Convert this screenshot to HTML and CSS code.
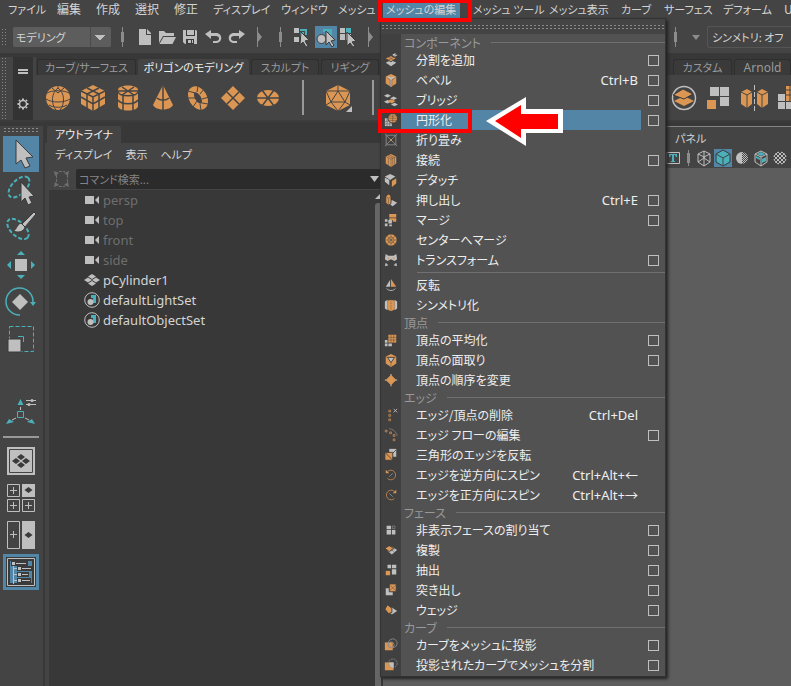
FILE: index.html
```html
<!DOCTYPE html>
<html lang="ja">
<head>
<meta charset="utf-8">
<title>Maya</title>
<link rel="stylesheet" href="styles.css">
</head>
<body>
<nav class="menubar">
  <button class="kana">ファイル</button><button>編集</button><button>作成</button><button>選択</button><button>修正</button><button class="kana">ディスプレイ</button><button class="kana">ウィンドウ</button><button class="kana">メッシュ</button><button class="open kana">メッシュの編集</button><button class="kana">メッシュ ツール</button><button class="kana">メッシュ表示</button><button class="kana">カーブ</button><button class="kana">サーフェス</button><button class="kana">デフォーム</button><button>UV</button>
</nav>

<div class="toolbar">
  <span class="grip"></span>
  <select class="mode" aria-label="メニューセット"><option>モデリング</option></select>
  <span class="handle"></span>
  <div class="files">
    <button aria-label="新規"><svg width="14" height="18" viewBox="0 0 14 18"><path class="g" d="M1 1h7v6h5v10H1z"/><path class="g" d="M9 1l4 4v1H9z"/></svg></button>
    <button aria-label="開く"><svg width="18" height="18" viewBox="0 0 18 18"><path class="g" d="M1 3h5l2 2h8v3H5l-4 7z"/><path class="g" d="M5.500 9H18l-3.500 7H1.500z"/></svg></button>
    <button aria-label="保存"><svg width="16" height="18" viewBox="0 0 16 18"><path class="g" d="M1 2h13l1 1v13H3l-2-2z"/><path class="d" d="M3 2h1v6h9V2h-1v5H5V2zM4 11h8v5H4z"/><path class="g" d="M6 12h5v3H6z"/><path class="d" d="M9 12h1v3H9z"/></svg></button>
    <button aria-label="元に戻す"><svg width="18" height="18" viewBox="0 0 18 18"><path class="g" d="M1 6l6-4v3h5c7 0 7 10 0 10H9v-2h3c4 0 4-5 0-5H7v3z"/></svg></button>
    <button aria-label="やり直し"><svg width="18" height="18" viewBox="0 0 18 18"><path class="g" d="M17 6l-6-4v3H6c-7 0-7 10 0 10h3v-2H6c-4 0-4-5 0-5h5v3z"/></svg></button>
  </div>
  <svg class="fold" width="5" height="20" viewBox="0 0 5 20"><path class="m" d="M0 0h1v20H0zM1 5l4 5-4 5z"/></svg>
  <span class="handle"></span>
  <div class="masks">
    <button aria-label="階層"><svg width="22" height="22" viewBox="0 0 22 22"><path class="g" d="M3 2h5v5H3zM3 11h5v5H3z"/><path class="lt" d="M9 4h6v5M10 10v-3h3" stroke-width="2"/><path class="g edge" d="M10 6l8 8-4 1 3 5-2 1-3-5-3 3z"/></svg></button>
    <button class="on" aria-label="オブジェクト"><svg width="22" height="22" viewBox="0 0 22 22"><path class="t" d="M8 3h9v9h-3V6H8z"/><circle class="g edge" cx="6.500" cy="13" r="4.500"/><path class="g edge" d="M11 5l9 9-4 1 3 4-2 2-3-5-3 3z"/></svg></button>
    <button aria-label="コンポーネント"><svg width="22" height="22" viewBox="0 0 22 22"><path class="g" d="M1 2h5v5H1zM1 8h5v6H1zM7 8h5v6H7z"/><path class="t" d="M7 2h5v5H7z"/><path class="g edge" d="M8 6l9 9-4 1 3 4-2 1-3-4-3 3z"/></svg></button>
  </div>
  <svg class="fold" width="5" height="20" viewBox="0 0 5 20"><path class="m" d="M0 0h1v20H0zM1 5l4 5-4 5z"/></svg>
  <div class="tail">
    <span class="handle"></span>
    <svg width="8" height="5" viewBox="0 0 8 5"><path class="m" d="M0 0h8L4 5z"/></svg>
    <span class="field">シンメトリ: オフ</span>
  </div>
</div>

<div class="shelf">
  <span class="grip"></span>
  <div class="shelf-side">
    <svg width="10" height="5" viewBox="0 0 10 5"><path class="g" d="M0 0h10v2H0zM0 3h10v2H0z"/></svg>
    <svg width="12" height="12" viewBox="0 0 12 12"><circle class="lg" cx="6" cy="6" r="3.500" stroke-width="1.500"/><path class="lg" stroke-width="2" d="M6 .5v1.500M6 10v1.500M.5 6H2M10 6h1.500M2 2l1 1M9 9l1 1M10 2L9 3M3 9l-1 1"/></svg>
  </div>
  <div class="shelf-main">
    <div class="tabs">
      <button>カーブ/サーフェス</button><button class="active">ポリゴンのモデリング</button><button>スカルプト</button><button>リギング</button>
      <span class="tabs-end"><button>カスタム</button><button class="latin">Arnold</button></span>
    </div>
    <div class="shelf-row">
      <button aria-label="球"><svg viewBox="0 0 26 26"><circle class="o" cx="13" cy="13" r="12"/><path class="ld" d="M2 8c5-3 17-3 22 0M1 14c6 4 18 4 24 0M4 20c5 3 13 3 18 0M13 3c-7 5-7 16-2 22M13 3c7 5 7 16 2 22M7 3l6 5 6-5M13 1v3"/></svg></button>
      <button aria-label="立方体"><svg viewBox="0 0 26 26"><path class="o" d="M13 0l12 6v13l-12 7-12-7V6z"/><path class="ld" stroke-width="1.500" d="M1 6l12 6 12-6M13 12v14M7 3l12 6v14M19 3L7 9v14M1 12l12 7 12-7"/></svg></button>
      <button aria-label="円柱"><svg viewBox="0 0 26 26"><path class="o" d="M3 5c0-6 20-6 20 0v16c0 6-20 6-20 0z"/><path class="ld" stroke-width="1.500" d="M3 7c2 5 18 5 20 0M3 15c3 5 17 5 20 0M8 11v14M18 11v14M3 6h20M7 2l12 8M19 2L7 10"/></svg></button>
      <button aria-label="円錐"><svg viewBox="0 0 26 26"><path class="o" d="M13 0l10 20c-3 6-17 6-20 0z"/><path class="ld" stroke-width="1.500" d="M13 0v26M7 13c3 3 9 3 12 0"/></svg></button>
      <button aria-label="トーラス"><svg viewBox="0 0 26 26"><ellipse class="lo" cx="13" cy="13" rx="6" ry="9.500" stroke-width="6" transform="rotate(-30 13 13)"/><path class="ld" d="M3 6l7 2M13 1l-1 6M2 13l8 0M8 22l4-6M16 25l-1-6M23 19l-6-1M24 12l-7 2M19 4l-4 5"/></svg></button>
      <button aria-label="平面"><svg viewBox="0 0 26 26"><path class="o" d="M13 1l12 12-12 12L1 13z"/><path class="ld" stroke-width="1.500" d="M7 7l12 12M19 7L7 19"/></svg></button>
      <button aria-label="ディスク"><svg viewBox="0 0 26 26"><ellipse class="o" cx="13" cy="13" rx="11" ry="8"/><path class="ld" stroke-width="1.500" d="M2 13h22M7 5l12 16M19 5L7 21"/></svg></button>
      <span class="bar"></span>
      <button aria-label="多面体"><svg viewBox="0 0 26 26"><path class="o" d="M13 0l12 6v14l-12 6-12-6V6z"/><path class="ld" d="M13 0v6M13 6L6 17h14zM1 6l12 0 12 0M1 6l5 11-5 3M25 6l-5 11 5 3M6 17l7 9 7-9"/></svg><svg class="corner" viewBox="0 0 6 6"><path class="g" d="M6 0v6H0z"/></svg></button>
      <span class="bar"></span>
      <div class="shelf-end">
        <button aria-label="結合"><svg viewBox="0 0 26 26"><circle class="lg" cx="13" cy="13" r="11.500" stroke-width="1.500"/><path class="o" d="M13 11l10 5-10 5-10-5z"/><path class="o edge" d="M12 4l10 5-9 5-11-4z"/></svg></button>
        <button aria-label="分離"><svg viewBox="0 0 26 26"><path class="g" d="M5 2h9v9H5zM15 2h9v9h-9zM15 12h9v9h-9z"/><path class="o" d="M2 15h9v9H2z"/></svg></button>
        <button aria-label="ミラー"><svg class="wide" viewBox="0 0 30 26"><path class="o" d="M2 7l6-3 5 3v12l-5 4-6-4zM18 7l5-3 6 3v12l-6 4-5-4z"/><path class="ld" d="M2 7l6 3 5-3M8 10v13M18 7l5 3 6-3M23 10v13"/><path class="lg" stroke-dasharray="5 2" d="M15.500 0v26"/></svg></button>
        <button aria-label="スムーズ"><svg viewBox="0 0 26 26"><path class="g" d="M1 9h7v7H1zM1 17h7v7H1zM9 17h7v7H9z"/><path class="o" d="M9 1h16v15H9z"/><path class="ld" d="M13 1v15M17 1v15M9 5h16M9 10h16"/></svg></button>
      </div>
    </div>
  </div>
</div>

<main class="workspace">
  <aside class="toolbox">
    <span class="dots"></span>
    <button class="on" aria-label="選択ツール"><svg viewBox="0 0 36 36"><path class="g edge" d="M13 4l17 17-7 1 4 8-5 2-4-8-5 4z"/></svg></button>
    <button aria-label="投げ縄"><svg viewBox="0 0 36 36"><ellipse class="lt" cx="16" cy="14" rx="13" ry="7" stroke-width="2" stroke-dasharray="4 2" transform="rotate(-45 16 14)"/><path class="g edge" d="M18 9l13 14-5 1 3 6-4 2-3-7-4 4z"/></svg></button>
    <button aria-label="ペイント選択"><svg viewBox="0 0 36 36"><ellipse class="lt" cx="15" cy="19" rx="13" ry="7" stroke-width="2" stroke-dasharray="4 2" transform="rotate(42 15 19)"/><path class="g edge" d="M31 2l2 2-11 13-3-3zM18 13l4 4c-1 5-7 6-12 4 4-1 3-6 8-8z"/></svg></button>
    <button aria-label="移動"><svg viewBox="0 0 36 36"><path class="g" d="M12 12h12v12H12z"/><path class="t" d="M18 4l4 4h-8zM18 32l4-4h-8zM4 18l4-4v8zM32 18l-4-4v8z"/></svg></button>
    <button aria-label="回転"><svg viewBox="0 0 36 36"><path class="lt" stroke-width="1.500" d="M17 31A13.500 13.500 0 1 1 30 18"/><path class="t" d="M27 18h6l-3 4z"/><path class="g" d="M17 10l8 8-8 8-8-8z"/></svg></button>
    <button aria-label="スケール"><svg viewBox="0 0 36 36"><path class="lt" stroke-dasharray="4 2" d="M6.500 5.500h24v25h-24z"/><path class="g edge" d="M5 18h13v13H5z"/><path class="lt" d="M15 15.500h5.500V21"/></svg></button>
    <span class="blank"></span>
    <button aria-label="最後のツール"><svg viewBox="0 0 36 36"><path class="lg" d="M17.500 12v3M13 23l-4 2M22 23l4 2M23 5.500h10M23 9.500h10"/><path class="lt" d="M14.500 16.500h6v6h-6z"/><path class="t" d="M17.500 4l3 6h-6zM3 29l3-5 5 3zM32 29l-3-5-5 3z"/><circle class="g" cx="29" cy="5.500" r="1.500"/><circle class="g" cx="26" cy="9.500" r="1.500"/></svg></button>
    <hr>
    <button aria-label="1 面"><svg viewBox="0 0 36 36"><path class="g" d="M4 4h28v28H4z"/><path class="ld" d="M6.500 6.500h23v23h-23z"/><path class="d" d="M18 11l4 3-4 3-4-3zM18 19l4 3-4 3-4-3zM13 15l4 3-4 3-4-3zM23 15l4 3-4 3-4-3z"/></svg></button>
    <button aria-label="4 面"><svg viewBox="0 0 36 36"><path class="g" d="M19 4h13v13H19z"/><path class="d" d="M25.500 7l4 3-4 3-4-3z"/><path class="lg" d="M4.500 4.500h12v12h-12zM4.500 19.500h12v12h-12zM19.500 19.500h12v12h-12zM10.500 7v7M7 10.500h7M10.500 22v7M7 25.500h7M25.500 22v7M22 25.500h7"/></svg></button>
    <button aria-label="2 面"><svg viewBox="0 0 36 36"><path class="lg" d="M4.500 4.500h12v27h-12zM10.500 14v7M7 17.500h7"/><path class="g" d="M19 4h13v28H19z"/><path class="d" d="M25.500 15l4 3-4 3-4-3z"/></svg></button>
    <button class="on" aria-label="アウトライナ"><svg viewBox="0 0 36 36"><path class="d" d="M3 3h30v30H3z"/><path class="b" d="M7 7h22v22H7z"/><path class="lg" d="M4.500 4.500h27v27h-27zM10.500 11v19M11 14.500h5M11 20.500h5M11 26.500h5"/><path class="d" d="M8 7h17v5H8zM14 12h15v5H14zM14 18h12v5H14zM14 24h14v5H14z"/><path class="g" d="M9 8h3v3H9zM13 9h10v1H13zM15 13h3v3h-3zM19 14h9v1h-9zM15 19h3v3h-3zM19 20h6v1h-6zM15 25h3v3h-3zM19 26h8v1h-8z"/></svg></button>
  </aside>

  <section class="outliner">
    <div class="panel-tabs"><span>アウトライナ</span></div>
    <div class="panel-menu"><button>ディスプレイ</button><button>表示</button><button>ヘルプ</button></div>
    <div class="search">
      <svg width="16" height="18" viewBox="0 0 16 18"><path class="s" d="M0 1l5 2-4 3zM15 1l-5 2 4 3zM0 17l5-2-4-3zM15 17l-5-2 4-3z"/><path class="ls" stroke-dasharray="3 1" d="M5 1.500h6M5 16.500h6M2.500 5v8M13.500 5v8"/></svg>
      <input type="text" placeholder="コマンド検索..." aria-label="コマンド検索">
      <svg class="drop" width="9" height="6" viewBox="0 0 9 6"><path class="g" d="M0 0h9L4.500 6z"/></svg>
    </div>
    <div class="tree">
      <ul>
        <li class="dim"><svg viewBox="0 0 16 16"><path class="g" d="M1 4h9v8H1zM11 8l4-4v8z"/></svg>persp</li>
        <li class="dim"><svg viewBox="0 0 16 16"><path class="g" d="M1 4h9v8H1zM11 8l4-4v8z"/></svg>top</li>
        <li class="dim"><svg viewBox="0 0 16 16"><path class="g" d="M1 4h9v8H1zM11 8l4-4v8z"/></svg>front</li>
        <li class="dim"><svg viewBox="0 0 16 16"><path class="g" d="M1 4h9v8H1zM11 8l4-4v8z"/></svg>side</li>
        <li><svg viewBox="0 0 16 16"><path class="g" d="M8 2l4 2.500L8 7 4 4.500zM8 9l4 2.500L8 14l-4-2.500zM4 5.500L8 8l-4 2.500L0 8zM12 5.500L16 8l-4 2.500L8 8z"/></svg>pCylinder1</li>
        <li><svg viewBox="0 0 16 16"><circle class="lg" cx="8" cy="8" r="7.300"/><path class="t" d="M7 3h5v8H9V6H7z"/><circle class="g" cx="6.500" cy="10" r="3"/></svg>defaultLightSet</li>
        <li><svg viewBox="0 0 16 16"><circle class="lg" cx="8" cy="8" r="7.300"/><path class="t" d="M7 3h5v8H9V6H7z"/><circle class="g" cx="6.500" cy="10" r="3"/></svg>defaultObjectSet</li>
      </ul>
      <div class="scroll"><svg width="5" height="5" viewBox="0 0 5 5"><path class="g" d="M5 0v5H0z"/></svg><i></i></div>
    </div>
  </section>

  <section class="viewport">
    <div class="view-head">
      <div class="view-menu"><button>パネル</button></div>
      <div class="view-tools">
        <svg viewBox="0 0 18 18"><path class="lg" d="M2.500 3.500h13v11h-13z"/><path class="t" d="M5 5h8v3h-1l-1-2h-1v6h1v1H7v-1h1V6H7L6 8H5z"/></svg>
        <span class="handle"></span>
        <svg viewBox="0 0 18 18"><path class="lg" d="M9 2l6 3v8l-6 4-6-4V5zM3 5l6 3 6-3M9 8v9M9 2v7l-6 4M9 9l6 4"/></svg>
        <svg class="on" viewBox="0 0 18 18"><path class="t edge" d="M9 1l7 4v8l-7 4-7-4V5z"/><path class="ld" d="M2 5l7 4 7-4M9 9v8"/></svg>
        <svg viewBox="0 0 18 18"><defs><pattern id="fine" width="2" height="2" patternUnits="userSpaceOnUse"><path class="g" d="M0 0h1v1H0zM1 1h1v1H1z"/></pattern></defs><path class="g" d="M9 3a6 6 0 0 0 0 12z"/><path fill="url(#fine)" d="M9 3a6 6 0 0 1 0 12z"/></svg>
        <svg viewBox="0 0 18 18"><path class="lg" d="M9 2l6 3v8l-6 4-6-4V5zM3 5l6 3 6-3M9 8v9"/><path class="t" d="M9 3l4 2-4 2-4-2zM4 7l4 2v2L4 9zM10 10l4-2v4l-4 2z"/></svg>
        <svg viewBox="0 0 18 18"><defs><pattern id="coarse" width="4" height="4" patternUnits="userSpaceOnUse"><path class="g" d="M0 0h2v2H0zM2 2h2v2H2z"/></pattern></defs><circle fill="url(#coarse)" cx="9" cy="9" r="6.500"/></svg>
      </div>
    </div>
  </section>
</main>

<div class="popup" role="menu">
  <div class="tear"></div>
  <h2>コンポーネント</h2>
  <div class="row"><svg viewBox="0 0 16 16"><path class="g" d="M8 8l6 3-6 4-6-4zM10 1h2V0h1v2h2v1h-2v2h-1V3h-2z"/><path class="o edge" d="M8 3l6 3-6 4-7-4z"/><path class="ld thin" d="M4 4l7 4M11 5L5 8"/></svg><button>分割を追加</button><button class="box" aria-label="オプション"></button></div>
  <div class="row"><svg viewBox="0 0 16 16"><path class="o" d="M8 1l6 3v8l-6 4-6-4V4z"/><path class="g" d="M3 5l5 2 5-2-2-1-3 1-3-1zM7 7h2v8H7z"/><path class="ld thin" d="M3 5l4 3v7M13 5L9 8v7"/></svg><button>ベベル<kbd>Ctrl+B</kbd></button><button class="box" aria-label="オプション"></button></div>
  <div class="row"><svg viewBox="0 0 16 16"><path class="g" d="M4 1l4 2-4 2-4-2zM11 4l4 2-4 2-4-2zM4 8l4 2-4 2-4-2zM12 11l4 2-4 2-4-2z"/><path class="o" d="M8 7l5 2-4 3-5-3z"/></svg><button>ブリッジ</button><button class="box" aria-label="オプション"></button></div>
  <div class="row"><svg viewBox="0 0 16 16"><path class="g" d="M1 6h8v9H1z"/><path class="ld thin" d="M1 9.500h8M1 12.500h8M3.500 6v9M6.500 6v9"/><circle class="o edge" cx="10" cy="6" r="5.500"/><path class="ld thin" d="M5 6h11M10 1v11M5 3.500h10M5 8.500h10"/></svg><button class="hot">円形化</button><button class="box" aria-label="オプション"></button></div>
  <div class="row"><svg viewBox="0 0 16 16"><path class="lm" d="M2.500 2.500h11v11h-11zM1 1l14 14M15 1L1 15"/><path class="o" d="M7 7h2v2H7z"/></svg><button>折り畳み</button></div>
  <div class="row"><svg viewBox="0 0 16 16"><path class="o" d="M8 1l6 3v8l-6 4-6-4V4z"/><path class="ld thin" d="M2 4l6 3 6-3M8 7v9M4 3l6 3v8M6 2l6 3v8M5 6v8"/></svg><button>接続</button><button class="box" aria-label="オプション"></button></div>
  <div class="row"><svg viewBox="0 0 16 16"><path class="g" d="M7 1l6 3-6 4-6-4zM1 5l5 3v6l-5-4z"/><path class="o" d="M9 9l5-3v6l-5 4z"/></svg><button>デタッチ</button></div>
  <div class="row"><svg viewBox="0 0 16 16"><path class="g" d="M9 8l6 3-5 4-6-4z"/><path class="o edge" d="M5 1l3 2v9l-3 2-3-3V4z"/><path class="ld thin" d="M2 4l3 2 3-2M5 6v8"/></svg><button>押し出し<kbd>Ctrl+E</kbd></button><button class="box" aria-label="オプション"></button></div>
  <div class="row"><svg viewBox="0 0 16 16"><path class="o" d="M6 1h4v4H6zM10 1h4v4h-4zM10 6h4v4h-4zM6 6h4v2H6z"/><path class="g" d="M1 7h3v3H1zM5 8h4v4H5zM1 12h3v3H1zM6 13h3v2H6z"/></svg><button>マージ</button><button class="box" aria-label="オプション"></button></div>
  <div class="row"><svg viewBox="0 0 16 16"><circle class="o" cx="8" cy="8" r="6.500"/><path class="ld thin" d="M1 8h14M8 1v14M3 3l10 10M13 3L3 13"/><circle class="ld thin" cx="8" cy="8" r="3.500"/></svg><button>センターへマージ</button></div>
  <div class="row"><svg viewBox="0 0 16 16"><path class="g" d="M2 1l3 2h6l3-2 1 6-3 2-4-2-4 2-3-2zM1 15l1-4 3 3zM15 15l-1-4-3 3z"/><path class="o" d="M4 5h2v2H4zM10 5h2v2h-2z"/></svg><button>トランスフォーム</button><button class="box" aria-label="オプション"></button></div>
  <hr>
  <div class="row"><svg viewBox="0 0 16 16"><path class="g" d="M7 2v8H2z"/><path class="o" d="M8 1l6 9H8z"/><path class="lg" d="M3 12c2 3 8 3 10 0"/></svg><button>反転</button></div>
  <div class="row"><svg viewBox="0 0 16 16"><path class="g" d="M1 4l3-2v12l-3-2zM15 4l-3-2v12l3-2z"/><path class="o" d="M4 3l4-1 4 1v10l-4 2-4-2z"/><path class="ld thin" stroke-dasharray="2 1" d="M8 2v13"/></svg><button>シンメトリ化</button></div>
  <h2>頂点</h2>
  <div class="row"><svg viewBox="0 0 16 16"><path class="g" d="M1 8h3v3H1zM1 12h3v3H1zM5 12h4v3H5z"/><path class="o" d="M5 2h9v9H5z"/><path class="ld thin" d="M8 2v9M11 2v9M5 5h9M5 8h9"/></svg><button>頂点の平均化</button><button class="box" aria-label="オプション"></button></div>
  <div class="row"><svg viewBox="0 0 16 16"><path class="o" d="M8 1l6 3v8l-6 4-6-4V4z"/><path class="g edge" d="M4 5h8l-4 6z"/><path class="ld thin" d="M8 11v4M2 4l2 1M14 4l-2 1"/></svg><button>頂点の面取り</button><button class="box" aria-label="オプション"></button></div>
  <div class="row"><svg viewBox="0 0 16 16"><path class="m" d="M7 1h2v2H7zM7 13h2v2H7zM1 7h2v2H1zM13 7h2v2h-2z"/><path class="o" d="M8 2l6 6-6 6-6-6z"/></svg><button>頂点の順序を変更</button></div>
  <h2>エッジ</h2>
  <div class="row"><svg viewBox="0 0 16 16"><path class="lo soft" d="M5.500 2.500h2v2h-2zM5.500 7.500h2v2h-2zM5.500 12.500h2v2h-2z"/><path class="lg" d="M11 1l4 4M15 1l-4 4"/></svg><button>エッジ/頂点の削除<kbd>Ctrl+Del</kbd></button></div>
  <div class="row"><svg viewBox="0 0 16 16"><path class="lo soft" d="M1.500 2.500h2v2h-2zM6.500 4.500h2v2h-2zM10.500 7.500h2v2h-2zM10.500 12.500h2v2h-2z"/><path class="lm soft" d="M6 1c4 0 8 3 9 8"/></svg><button>エッジ フローの編集</button><button class="box" aria-label="オプション"></button></div>
  <div class="row"><svg viewBox="0 0 16 16"><path class="g" d="M6 1h8v9H6z"/><path class="o edge" d="M1 5h9v9H1z"/><path class="ld" d="M1 5l9 9M10 6l4-4"/></svg><button>三角形のエッジを反転</button></div>
  <div class="row"><svg viewBox="0 0 16 16"><path class="lo soft" d="M4 4a5.500 5.500 0 1 1 0 8"/><path class="o" d="M2 2v4h4z"/><path class="lm" d="M6 10l4-4"/></svg><button>エッジを逆方向にスピン<kbd>Ctrl+Alt+←</kbd></button></div>
  <div class="row"><svg viewBox="0 0 16 16"><path class="lo soft" d="M12 4a5.500 5.500 0 1 0 0 8"/><path class="o" d="M14 2v4h-4z"/><path class="lm" d="M6 6l4 4"/></svg><button>エッジを正方向にスピン<kbd>Ctrl+Alt+→</kbd></button></div>
  <h2>フェース</h2>
  <div class="row"><svg viewBox="0 0 16 16"><path class="g" d="M3 3h5v4H3zM3 8h5v5H3zM9 8h4v5H9z"/><path class="lm soft" d="M9.500 3.500h3v3h-3z"/></svg><button>非表示フェースの割り当て</button><button class="box" aria-label="オプション"></button></div>
  <div class="row"><svg viewBox="0 0 16 16"><path class="g" d="M9 4l6 4-6 5-5-4z"/><path class="o edge" d="M6 3l5 3-5 4-5-4z"/><path class="ld thin" d="M8 9l5-3M8 7l4 4"/></svg><button>複製</button><button class="box" aria-label="オプション"></button></div>
  <div class="row"><svg viewBox="0 0 16 16"><path class="g" d="M4 2h4v4H4zM9 2h5v4H9zM9 7h5v6H9z"/><path class="o" d="M2 9h5v5H2z"/></svg><button>抽出</button><button class="box" aria-label="オプション"></button></div>
  <div class="row"><svg viewBox="0 0 16 16"><path class="g" d="M2 6h8v8H2z"/><path class="o edge" d="M6 1h8v9H6z"/><path class="ld thin" d="M6 2l8 7M14 2L6 9"/></svg><button>突き出し</button><button class="box" aria-label="オプション"></button></div>
  <div class="row"><svg viewBox="0 0 16 16"><path class="g" d="M9 5l6 4-6 4-5-4z"/><path class="o edge" d="M4 2l5 4v5l-4 1-4-5z"/></svg><button>ウェッジ</button><button class="box" aria-label="オプション"></button></div>
  <h2>カーブ</h2>
  <div class="row"><svg viewBox="0 0 16 16"><path class="o" d="M1 5h9v9H1z"/><circle class="lm" cx="10" cy="6" r="5"/><circle class="lm" cx="8" cy="8" r="3.500"/></svg><button>カーブをメッシュに投影</button><button class="box" aria-label="オプション"></button></div>
  <div class="row"><svg viewBox="0 0 16 16"><path class="o" d="M1 5h10v9H1z"/><circle class="lm" cx="10" cy="6" r="5" stroke-dasharray="2 1"/><path class="g" d="M6 5h5v6c-3 0-5-2-5-6z"/></svg><button>投影されたカーブでメッシュを分割</button><button class="box" aria-label="オプション"></button></div>
</div>

<div class="mark mark-menu"></div>
<div class="mark mark-item"></div>
<svg class="arrow" width="79" height="52" viewBox="0 0 79 52"><path class="white" d="M1 25L41 1v12h37v24H41v13z"/><path class="red" d="M10 25L36 9v9h37v15H36v9z"/></svg>
</body>
</html>
```
FILE: styles.css
```css
:root {
  --bg: #444;
  --dark: #383838;
  --text: #d4d4d4;
  --blue: #5285a6;
  --orange: #dc9653;
  --grey: #bfbfbf;
  --teal: #4ab0ba;
}

* { box-sizing: border-box; }

body {
  margin: 0;
  min-height: 100vh;
  display: flex;
  flex-direction: column;
  position: relative;
  overflow: hidden;
  background: var(--bg);
  color: var(--text);
  font: 12px/16px "Noto Sans CJK JP", sans-serif;
  font-feature-settings: "palt";
}

button, input, select {
  margin: 0;
  padding: 0;
  border: 0;
  background: none;
  color: inherit;
  font: inherit;
  font-feature-settings: inherit;
  text-align: left;
  white-space: nowrap;
}

svg { display: block; flex: none; }
.g { fill: var(--grey); }
.o { fill: var(--orange); }
.t { fill: var(--teal); }
.d { fill: #3a3a3a; }
.m { fill: #8c8c8c; }
.s { fill: #6e6e6e; }
.b { fill: var(--blue); }
.lg, .lo, .lt, .ld, .lm, .ls { fill: none; }
.lg { stroke: var(--grey); }
.lo { stroke: var(--orange); }
.lt { stroke: var(--teal); }
.ld { stroke: #444; }
.lm { stroke: #8c8c8c; }
.ls { stroke: #6e6e6e; }
.edge { stroke: #3a3a3a; stroke-width: 1; }
.thin { stroke-opacity: .5; }
.soft { stroke-opacity: .8; }
.white { fill: #fff; }
.red { fill: #f00; }

.menubar {
  display: grid;
  grid-template-columns: 49px 39px 39px 39px 39px 68px 57px 45px 90px 76px 72px 43px 59px 61px 40px;
  height: 20px;
  padding-left: 8px;
}
.menubar button { height: 18px; }
.menubar .kana { font-size: 11px; }
.menubar .open {
  width: 77px;
  padding-left: 3px;
  background: var(--blue);
}

.grip {
  width: 6px;
  align-self: stretch;
  margin: 0 6px 0 1px;
  background: radial-gradient(circle, #858585 0 .7px, transparent 1px) 0 0 / 3px 3px;
}
.handle {
  width: 3px;
  height: 20px;
  background: linear-gradient(#8c8c8c, #8c8c8c) center / 1px 100% no-repeat,
    linear-gradient(#8c8c8c, #8c8c8c) center / 3px 10px no-repeat;
}

.toolbar {
  display: flex;
  align-items: center;
  height: 37px;
  padding: 8px 0 7px;
  border-bottom: 4px solid var(--dark);
}
.mode {
  width: 98px;
  height: 20px;
  padding-left: 3px;
  margin-right: 10px;
  border-radius: 2px;
  appearance: none;
  font-size: 11px;
  background: linear-gradient(to bottom right, var(--grey) 50%, transparent 52%) right 6px center / 5px 5px no-repeat,
    linear-gradient(to bottom left, var(--grey) 50%, transparent 52%) right 11px center / 5px 5px no-repeat,
    linear-gradient(#4a4a4a, #4a4a4a) right 20px top / 1px 100% no-repeat, #5d5d5d;
}
.files { display: flex; gap: 6px; margin: 0 11px 0 14px; }
.files + .fold { margin-right: 17px; }
.masks { display: flex; gap: 2px; margin: 0 7px 0 9px; }
.masks .on, .toolbox .on, .view-tools .on { background: var(--blue); }
.tail { display: flex; align-items: center; gap: 7px; width: 117px; margin-left: auto; }
.tail svg { margin-left: 8px; }
.field {
  flex: 1;
  height: 22px;
  padding: 2px 4px;
  border: 1px solid #555;
  border-right: 0;
  border-radius: 3px 0 0 3px;
  font-size: 11px;
  white-space: nowrap;
}

.shelf {
  display: flex;
  height: 65px;
  border-bottom: 2px solid #3c3c3c;
}
.shelf-side {
  display: flex;
  flex-direction: column;
  justify-content: space-between;
  align-items: center;
  width: 20px;
  padding: 12px 0 10px;
  background: #333;
}
.shelf-main { flex: 1; min-width: 0; margin-left: 3px; }
.tabs {
  display: grid;
  grid-template-columns: 99px 111px 68px 58px 1fr;
  gap: 2px;
  height: 18px;
  padding: 2px 0 0 1px;
  background: var(--dark);
}
.tabs button {
  height: 16px;
  border: 1px solid #2e2e2e;
  border-bottom: 0;
  border-radius: 3px 3px 0 0;
  color: #999;
  background: #3a3a3a;
  font-size: 11px;
  line-height: 15px;
  text-align: center;
}
.tabs .active { background: var(--bg); border-color: var(--bg); color: #eee; }
.tabs .latin { font: 12px/15px "Noto Sans", sans-serif; }
.tabs-end { display: grid; grid-template-columns: 59px 57px; gap: 2px; justify-self: end; }
.shelf-row { display: flex; align-items: center; gap: 9px; height: 45px; padding-left: 9px; }
.shelf-row svg { width: 26px; height: 26px; }
.shelf-row button { position: relative; }
.shelf-row .corner { position: absolute; right: -1px; bottom: -1px; width: 6px; height: 6px; }
.shelf-row .wide { width: 30px; }
.bar { width: 2px; height: 35px; margin: 0 12px; background: #999; }
.shelf-end { display: flex; gap: 8px; width: 120px; margin-left: auto; flex: none; }

.workspace {
  flex: 1;
  display: grid;
  grid-template-columns: 43px 336px 1fr;
  gap: 2px;
  padding-top: 4px;
  background: var(--dark);
}
.toolbox {
  display: flex;
  flex-direction: column;
  gap: 1px;
  padding: 0 4px 0 3px;
  background: var(--bg);
}
.dots, .tear { background: radial-gradient(circle, #8c8c8c 0 .7px, transparent 1px) 0 0 / 4px 3px; }
.dots { height: 6px; margin: 1px 0 2px; }
.toolbox button, .blank { height: 36px; }
.toolbox svg { width: 36px; height: 36px; }
.toolbox hr { width: 36px; height: 2px; margin: 4px 0; border: 0; background: #999; }

.outliner { display: flex; flex-direction: column; background: var(--bg); min-width: 0; }
.panel-tabs { height: 17px; padding-left: 2px; background: var(--dark); font-size: 11px; }
.panel-tabs span {
  display: inline-block;
  height: 17px;
  padding: 0 8px;
  border-radius: 2px 2px 0 0;
  background: var(--bg);
  color: #eee;
}
.panel-menu { display: flex; gap: 13px; padding: 3px 10px 7px; font-size: 11px; }
.search { display: flex; align-items: center; gap: 6px; height: 20px; padding-left: 9px; position: relative; }
.search input { flex: 1; height: 20px; padding-left: 3px; background: #2b2b2b; border-radius: 2px; font-size: 11px; }
.search input::placeholder { color: #858585; opacity: 1; }
.drop { position: absolute; right: 2px; top: 7px; }
.tree { flex: 1; display: flex; margin: 1px 0 0 4px; background: var(--dark); }
.tree ul { flex: 1; margin: 0; padding: 0 0 0 35px; list-style: none; }
.tree li {
  display: flex;
  align-items: center;
  gap: 3px;
  height: 20px;
  font: 13px/20px "Noto Sans", sans-serif;
}
.tree li svg { width: 16px; height: 16px; }
.dim { color: #6e6e6e; }
.scroll { display: flex; flex-direction: column; width: 6px; padding-top: 4px; }
.scroll i { flex: 1; margin-top: 4px; border-radius: 3px 0 0 0; background: #666; }

.viewport { display: flex; flex-direction: column; background: #5d5d5d; min-width: 0; }
.view-head {
  display: flex;
  flex-direction: column;
  align-items: flex-end;
  height: 42px;
  padding-top: 1px;
  border-top: 1px solid #858585;
  background: var(--bg);
}
.view-menu { width: 116px; height: 21px; padding-top: 2px; font-size: 11px; }
.view-tools { display: flex; gap: 1px; align-items: center; width: 127px; }
.view-tools svg { width: 18px; height: 18px; }
.view-tools .handle { height: 16px; margin: 0 4px; }

.popup {
  position: absolute;
  top: 18px;
  left: 380px;
  width: 286px;
  padding-bottom: 1px;
  border: 1px solid #333;
  background: linear-gradient(90deg, #404040 20px, #525252 0);
  box-shadow: 2px 2px 3px #222;
  color: #eee;
}
.tear { height: 15px; border: solid #444; border-width: 5px 0 4px; background-color: #444; }
.popup h2 {
  display: flex;
  align-items: center;
  gap: 10px;
  height: 16px;
  margin: 0 0 0 23px;
  font-size: 12px;
  font-weight: 400;
  line-height: 15px;
  color: #999;
}
.popup h2:not(.tear + h2) { height: 15px; }
.popup h2::after { content: ""; flex: 1; height: 1px; background: #707070; }
.popup hr { height: 5px; margin: 0 0 0 36px; border: 0; background: linear-gradient(#707070, #707070) 0 2px / 100% 1px no-repeat; }
.row { display: flex; align-items: center; height: 20px; }
.row svg { width: 14px; height: 14px; margin: 0 3px; }
.row button:not(.box) {
  display: flex;
  justify-content: space-between;
  align-items: center;
  width: 240px;
  height: 20px;
  padding: 0 3px 0 15px;
}
.row .hot { background: var(--blue); }
kbd { font: 13px/20px "Noto Sans", "Noto Sans CJK JP", sans-serif; }
.row .box { width: 11px; height: 11px; margin-left: 7px; border: 1px solid var(--grey); }

.mark { position: absolute; left: 378px; width: 94px; border: 4px solid #f00; }
.mark-menu { top: -1px; height: 23px; }
.mark-item { top: 109px; height: 24px; }
.arrow { position: absolute; left: 485px; top: 96px; }
```
